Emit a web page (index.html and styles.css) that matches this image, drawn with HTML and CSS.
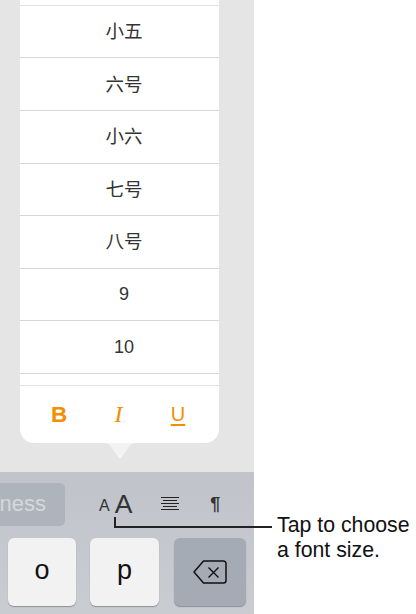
FILE: index.html
```html
<!DOCTYPE html>
<html lang="zh">
<head>
    <meta charset="UTF-8">
    <meta name="viewport" content="width=device-width, initial-scale=1.0">
    <title>Font size</title>
    <link rel="stylesheet" href="styles.css">
</head>
<body>
    <div class="screen">
        <div class="canvas">
            <div class="popover">
                <div class="sizes">
                    <div class="size size-cut"></div>
                    <div class="size size-cjk">小五</div>
                    <div class="size size-cjk">六号</div>
                    <div class="size size-cjk">小六</div>
                    <div class="size size-cjk">七号</div>
                    <div class="size size-cjk">八号</div>
                    <div class="size">9</div>
                    <div class="size">10</div>
                    <div class="size size-end"></div>
                </div>
                <div class="styles">
                    <span class="style-btn style-b">B</span>
                    <span class="style-btn style-i">I</span>
                    <span class="style-btn style-u">U</span>
                </div>
                <div class="arrow"></div>
            </div>
        </div>
        <div class="keyboard">
            <div class="toolbar">
                <div class="suggestion">ness</div>
                <div class="aa"><span class="aa-small">A</span><span class="aa-big">A</span></div>
                <svg class="align-icon" width="18" height="14" viewBox="0 0 18 14">
                    <path d="M0 .5h18M2 3.500h14M0 6.500h18M2 9.500h14M0 12.500h18" stroke="#222" stroke-width="1" fill="none"/>
                </svg>
                <span class="pilcrow">¶</span>
            </div>
            <div class="keys">
                <div class="key">o</div>
                <div class="key key-p">p</div>
                <div class="key key-delete">
                    <svg width="34" height="24" viewBox="0 0 34 24">
                        <path d="M10.500 1h20a2.500 2.500 0 0 1 2.500 2.500v17a2.500 2.500 0 0 1-2.500 2.500h-20l-9.500-11z" stroke="#111" stroke-width="1.500" fill="none" stroke-linejoin="round"/>
                        <path d="M15.500 7.500l10 10M25.500 7.500l-10 10" stroke="#111" stroke-width="1.400" fill="none"/>
                    </svg>
                </div>
            </div>
        </div>
    </div>
    <p class="note">Tap to choose a font size.</p>
    <div class="callout"></div>
</body>
</html>
```

FILE: styles.css
```css
body {
    margin: 0;
    width: 416px;
    height: 614px;
    overflow: hidden;
    background-color: #fff;
    display: flex;
    font-family: "Liberation Sans", sans-serif;
}

.screen {
    width: 254px;
    height: 614px;
    flex: none;
    display: flex;
    flex-direction: column;
}

.canvas {
    height: 472px;
    flex: none;
    background-color: #e5e5e5;
    padding: 0 35px 0 20px;
    box-sizing: border-box;
}

.popover {
    position: relative;
    width: 199px;
    height: 443px;
    background-color: #fff;
    border-radius: 0 0 14px 14px;
}

.sizes {
    height: 386px;
    overflow: hidden;
}

.size {
    height: 52.65px;
    box-sizing: border-box;
    border-bottom: 1px solid #d6d6d6;
    padding-left: 9px;
    display: flex;
    align-items: center;
    justify-content: center;
    font-size: 18px;
    color: #333;
}

.size-cjk {
    font-family: "Noto Sans CJK SC", sans-serif;
    font-size: 18.500px;
    padding-bottom: 3px;
}

.size-cut {
    height: 5.600px;
    border-bottom-color: #e2e2e2;
}

.size-end {
    height: 11.850px;
    border-bottom-color: #e2e2e2;
}

.styles {
    height: 57px;
    display: grid;
    grid-template-columns: repeat(3, 59.500px);
    justify-content: center;
    align-items: center;
    justify-items: center;
    padding-right: 2px;
    color: #f28e00;
}

.style-b {
    font-size: 22.500px;
    font-weight: bold;
}

.style-i {
    font-family: "Liberation Serif", serif;
    font-style: italic;
    font-size: 24px;
}

.style-u {
    font-size: 20px;
    text-decoration: underline;
    text-decoration-thickness: 2px;
    text-underline-offset: 3px;
}

.arrow {
    position: absolute;
    left: 83px;
    top: 443px;
    width: 34px;
    height: 17px;
    background-color: #f3f3f3;
    clip-path: path("M0 0H34C29 0 27 2 25 5L19 14Q17 16.500 15 14L9 5C7 2 5 0 0 0Z");
}

.keyboard {
    flex: 1;
    background: linear-gradient(#c0c3ca, #c9ccd1);
    display: flex;
    flex-direction: column;
}

.toolbar {
    height: 66px;
    flex: none;
    display: flex;
    align-items: center;
    box-sizing: border-box;
    padding-bottom: 2px;
}

.suggestion {
    width: 65px;
    height: 43px;
    flex: none;
    box-sizing: border-box;
    background-color: #aeb4bb;
    border-radius: 0 5px 5px 0;
    display: flex;
    align-items: center;
    justify-content: flex-end;
    padding-right: 19px;
    overflow: hidden;
    white-space: nowrap;
    font-size: 22px;
    color: #d5d8dc;
}

.aa {
    margin-left: 34px;
    color: #333;
    display: flex;
    align-items: baseline;
    gap: 5px;
}

.aa-small {
    font-size: 16px;
    position: relative;
    top: -2px;
}

.aa-big {
    font-size: 26.500px;
}

.align-icon {
    margin-left: 29px;
}

.pilcrow {
    margin-left: 31px;
    font-size: 18px;
    font-weight: bold;
    color: #333;
}

.keys {
    display: flex;
    gap: 14px;
    padding-left: 8px;
}

.key {
    width: 68px;
    height: 68px;
    flex: none;
    background-color: #f2f2f2;
    border-radius: 6px;
    box-shadow: 0 1px 1px #8c8f94;
    display: flex;
    align-items: center;
    justify-content: center;
    font-size: 27px;
    color: #111;
    padding-bottom: 4px;
    box-sizing: border-box;
}

.key-p {
    width: 69px;
}

.key-delete {
    width: 72px;
    margin-left: 1px;
    background-color: #a4abb5;
    padding: 0;
}

.note {
    margin: 513px 0 0 23px;
    width: 139px;
    font-size: 21.300px;
    line-height: 25px;
    color: #111;
}

.callout {
    position: absolute;
    left: 114px;
    top: 517px;
    width: 156px;
    height: 9px;
    border-left: 2px solid #222;
    border-bottom: 2px solid #222;
}
```
